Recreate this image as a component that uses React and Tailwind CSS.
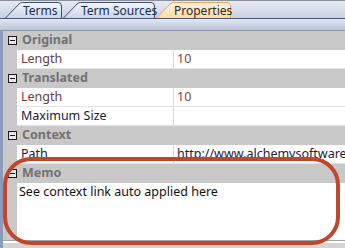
const font = "font-['Segoe_UI','Noto_Sans','DejaVu_Sans',sans-serif]";

function Tab({ label, width, active }) {
  const id = active ? 'tabActive' : 'tabIdle';
  return (
    <div className="relative h-[16px] shrink-0" style={{ width }}>
      <svg className="absolute inset-0" width={width} height="16" viewBox={`0 0 ${width} 16`}>
        <defs>
          <linearGradient id={id} x1="0" y1="0" x2="0" y2="1">
            {active ? (
              <>
                <stop offset="0" stopColor="#fff4e2" />
                <stop offset="1" stopColor="#fbd9a6" />
              </>
            ) : (
              <>
                <stop offset="0" stopColor="#f3f6fb" />
                <stop offset="1" stopColor="#cbd4e4" />
              </>
            )}
          </linearGradient>
        </defs>
        <path
          d={`M0.5 16 L14 2 Q15.5 0.5 17.5 0.5 L${width - 5} 0.5 Q${width - 1.5} 0.5 ${width - 1.5} 4 L${width - 1.5} 16`}
          fill={`url(#${id})`}
          stroke={active ? '#e8a45a' : '#3d4a66'}
          strokeWidth="1"
        />
      </svg>
      <span className={`relative block pl-[18px] pt-[1px] leading-[16px] text-[12px] whitespace-nowrap ${active ? 'text-[#2a2a2a]' : 'text-[#1d2b4a]'}`}>
        {label}
      </span>
    </div>
  );
}

function Header({ label }) {
  return (
    <div className="h-[19px] flex items-center bg-[#c8c8c8] border-b border-[#c8c8c8]">
      <div className="w-[18px] flex justify-center">
        <div className="w-[9px] h-[9px] border border-[#1a1a1a] bg-[#e8e8e8] flex items-center justify-center">
          <div className="w-[5px] h-px bg-[#1a1a1a]" />
        </div>
      </div>
      <span className="pl-[1px] font-bold text-[12.5px] text-[#727272]">{label}</span>
    </div>
  );
}

function Row({ label, value, muted }) {
  return (
    <div className="h-[19px] flex">
      <div className="w-[14px] bg-[#c8c8c8]" />
      <div className="flex-1 flex bg-white border-b border-[#e4e4e4]">
        <div className={`w-[157px] pl-[4px] leading-[18px] border-r border-[#d8d8d8] whitespace-nowrap ${muted ? 'text-[#6a3c4c]' : 'text-[#1a1a3a]'}`}>
          {label}
        </div>
        <div className={`flex-1 pl-[3px] leading-[18px] whitespace-nowrap overflow-hidden ${muted ? 'text-[#7a4646]' : 'text-[#1a1a3a]'}`}>
          {value}
        </div>
      </div>
    </div>
  );
}

export default function App() {
  return (
    <div className={`relative w-[345px] h-[248px] overflow-hidden bg-[#d4d4d4] text-[12.5px] ${font}`}>
      <div className="flex h-full">
        <div className="flex-1 flex flex-col">
          {/* tab strip */}
          <div className="h-[19px] flex items-end pl-[5px] border-t border-[#8a8f9c] border-b border-b-[#4a5878] bg-gradient-to-b from-[#e6eaf2] to-[#c9d1e1]">
            <Tab label="Terms" width={58} />
            <Tab label="Term Sources" width={93} />
            <Tab label="Properties" width={76} active />
          </div>
          <div className="h-[12px] border-b border-[#8e96a6] bg-gradient-to-b from-[#e3e8f1] to-[#b9c3d7]" />

          <div className="flex-1 flex">
            <div className="w-[3px] bg-[#8c9bb8]" />
            <div className="flex-1 flex flex-col">
              <Header label="Original" />
              <Row label="Length" value="10" muted />
              <Header label="Translated" />
              <Row label="Length" value="10" muted />
              <Row label="Maximum Size" value="" />
              <Header label="Context" />
              <Row label="Path" value="http://www.alchemysoftware.com" />
              <Header label="Memo" />
              <div className="h-[57px] flex">
                <div className="w-[14px] bg-[#c8c8c8]" />
                <div className="flex-1 bg-white pl-[2px] pt-[1px] text-[#111] leading-[15px]">
                  See context link auto applied here
                </div>
              </div>
              <div className="h-px bg-[#a4a4a4]" />
              <div className="h-[2px] bg-white" />
            </div>
          </div>
        </div>
        <div className="w-[3px] bg-[#4a5876]" />
      </div>

      {/* annotation */}
      <div className="absolute left-[3px] top-[157px] w-[337px] h-[88px] border-[4px] border-[#c1462d] rounded-[28px]" />
    </div>
  );
}
